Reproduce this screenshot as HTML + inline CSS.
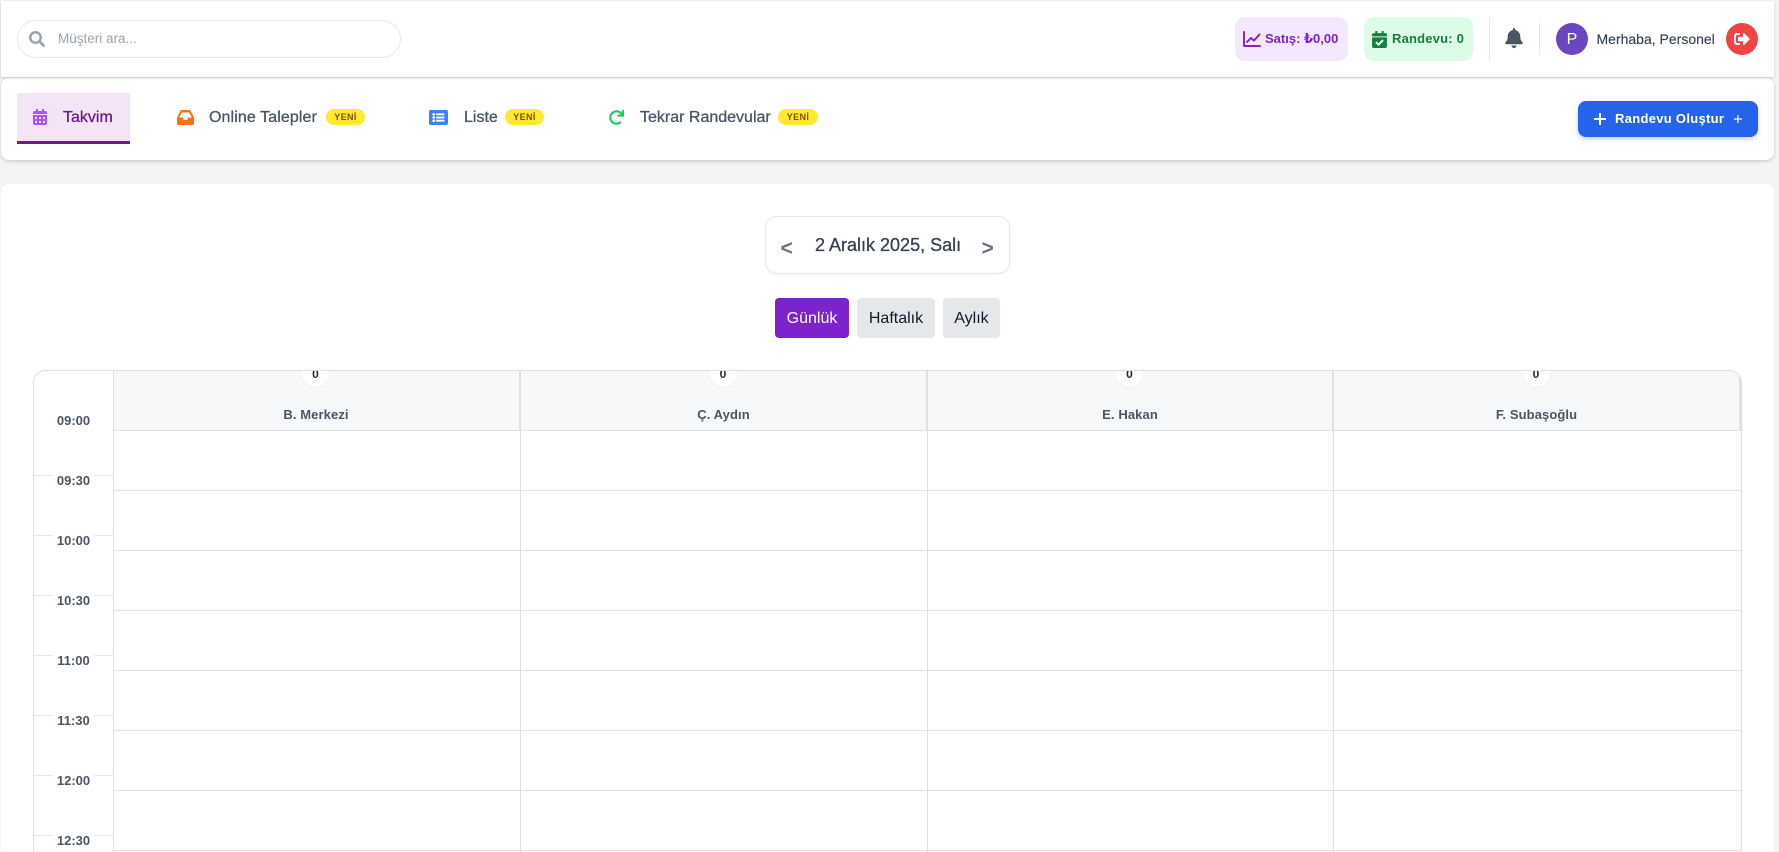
<!DOCTYPE html>
<html lang="tr">
<head>
<meta charset="utf-8">
<title>Takvim</title>
<style>
*{box-sizing:border-box;margin:0;padding:0}
html,body{width:1779px;height:852px;overflow:hidden;background:#f3f4f6;font-family:"Liberation Sans","DejaVu Sans",sans-serif}
#p{position:relative;width:1779px;height:852px;overflow:hidden;background:#f3f4f6}
.a{position:absolute;display:block}
.t{position:absolute;white-space:nowrap;line-height:20px;height:20px}
svg{position:absolute;display:block}
.hdr{position:absolute;left:1px;top:1px;width:1773px;height:76px;background:#fff;box-shadow:0 1px 3px rgba(0,0,0,.12),0 1px 2px rgba(0,0,0,.06)}
.nav{position:absolute;left:1px;top:78px;width:1773px;height:82px;background:#fff;border-radius:8px;box-shadow:0 1px 3px rgba(0,0,0,.14),0 2px 4px rgba(0,0,0,.06)}
.main{position:absolute;left:1px;top:184px;width:1773px;height:668px;background:#fff;border-radius:8px 8px 0 0}
.badge{position:absolute;top:109px;height:16px;border-radius:8px;background:#fde92f;color:#854d0e;font-size:9px;font-weight:700;line-height:16px;text-align:center;letter-spacing:.4px}
.nl{color:#4b5563;font-size:16px;font-weight:400;top:108px;-webkit-text-stroke:.3px #4b5563}
.vb{position:absolute;top:298px;height:40px;border-radius:4px;background:#e5e7eb;color:#111827;font-size:16px;line-height:41px;text-align:center}
.cal{position:absolute;left:33px;top:370px;width:1709px;height:482px;border:1px solid #e0e0e0;border-bottom:0;border-radius:12px 12px 0 0;overflow:hidden;background:#fff}
.hc{position:absolute;top:0;height:60px;background:#f7f8fa;border-right:2px solid #e0e0e0;border-bottom:1px solid #e0e0e0}
.hc b{position:absolute;left:0;right:0;top:34px;text-align:center;font-size:13px;letter-spacing:.1px;line-height:20px;color:#4b5563}
.hc i{position:absolute;left:50%;top:-11px;width:27px;height:27px;margin-left:-14px;border-radius:50%;background:#fff;box-shadow:0 1px 1px rgba(0,0,0,.04);font-style:normal;font-weight:700;font-size:12px;line-height:29px;text-align:center;color:#1f2937}
.hl{position:absolute;left:79px;right:0;height:1px;background:#e0e0e0}
.vl{position:absolute;top:0;bottom:0;width:1px;background:#e0e0e0}
.tl{position:absolute;left:0;width:79px;height:1px;background:#e5e7eb}
.tm{position:absolute;left:19px;width:41px;height:18px;background:#fff;text-align:center;font-size:13px;font-weight:700;line-height:18px;color:#4b5563}
</style>
</head>
<body>
<div id="p">

<div class="nav"></div>
<div class="hdr"></div>

<div class="a" style="left:17px;top:20px;width:384px;height:38px;border:1px solid #e5e7eb;border-radius:19px;background:#fff"></div>
<svg style="left:29px;top:31px" width="16" height="16" viewBox="0 0 512 512" fill="#9ca3af"><path d="M505 442.7L405.3 343c-4.5-4.5-10.6-7-17-7H372c27.6-35.3 44-79.7 44-128C416 93.1 322.9 0 208 0S0 93.1 0 208s93.1 208 208 208c48.3 0 92.7-16.4 128-44v16.3c0 6.4 2.5 12.5 7 17l99.7 99.7c9.4 9.4 24.6 9.4 33.9 0l28.3-28.3c9.4-9.4 9.4-24.6.1-34zM208 336c-70.7 0-128-57.2-128-128 0-70.7 57.2-128 128-128 70.7 0 128 57.2 128 128 0 70.7-57.2 128-128 128z"/></svg>
<span class="t" style="left:58px;top:29px;font-size:13.5px;color:#9ca3af">Müşteri ara...</span>

<div class="a" style="left:1235px;top:17px;width:113px;height:44px;border-radius:10px;background:#f3e8ff"></div>
<svg style="left:1243px;top:31px" width="18" height="16" viewBox="0 0 18 16" fill="none" stroke="#7e22ce" stroke-width="1.9" stroke-linecap="round" stroke-linejoin="round"><path d="M1 1v14h16"/><path d="M4 11l4-4 3 2.500 5.500-6"/></svg>
<span class="t" style="left:1265px;top:29px;font-size:13px;font-weight:700;color:#7e22ce">Satış: ₺0,00</span>

<div class="a" style="left:1364px;top:17px;width:109px;height:44px;border-radius:10px;background:#dcfce7"></div>
<svg style="left:1372px;top:31px" width="15" height="17" viewBox="0 0 448 512" fill="#15803d"><path d="M436 160H12c-6.627 0-12-5.373-12-12v-36c0-26.51 21.49-48 48-48h48V12c0-6.627 5.373-12 12-12h40c6.627 0 12 5.373 12 12v52h128V12c0-6.627 5.373-12 12-12h40c6.627 0 12 5.373 12 12v52h48c26.51 0 48 21.49 48 48v36c0 6.627-5.373 12-12 12zM12 192h424c6.627 0 12 5.373 12 12v260c0 26.51-21.49 48-48 48H48c-26.51 0-48-21.49-48-48V204c0-6.627 5.373-12 12-12zm333.296 95.947l-28.169-28.398c-4.667-4.705-12.265-4.736-16.97-.068L194.12 364.665l-45.98-46.352c-4.667-4.705-12.266-4.736-16.971-.068l-28.397 28.17c-4.705 4.667-4.736 12.265-.068 16.97l82.601 83.269c4.667 4.705 12.265 4.736 16.97.068l142.953-141.805c4.705-4.667 4.736-12.265.068-16.97z"/></svg>
<span class="t" style="left:1392px;top:29px;font-size:13px;font-weight:700;letter-spacing:.2px;color:#15803d">Randevu: 0</span>

<div class="a" style="left:1489px;top:17px;width:1px;height:44px;background:#e5e7eb"></div>
<svg style="left:1505px;top:28px" width="18" height="20" viewBox="0 0 448 512" fill="#4b5563"><path d="M224 512c35.32 0 63.97-28.65 63.97-64H160.03c0 35.35 28.65 64 63.97 64zm215.39-149.71c-19.32-20.76-55.47-51.99-55.47-154.29 0-77.7-54.48-139.9-127.94-155.16V32c0-17.67-14.32-32-31.98-32s-31.98 14.33-31.98 32v20.84C118.56 68.1 64.08 130.3 64.08 208c0 102.3-36.15 133.53-55.47 154.29-6 6.45-8.66 14.16-8.61 21.71.11 16.4 12.98 32 32.1 32h383.8c19.12 0 32-15.6 32.1-32 .05-7.55-2.61-15.27-8.61-21.71z"/></svg>
<div class="a" style="left:1539px;top:23px;width:1px;height:32px;background:#e5e7eb"></div>
<div class="a" style="left:1556px;top:23px;width:32px;height:32px;border-radius:50%;background:#6b46c1;color:#fff;font-size:16px;line-height:33px;text-align:center">P</div>
<span class="t" style="left:1596.500px;top:29px;font-size:14px;color:#374151;-webkit-text-stroke:.15px #374151">Merhaba, Personel</span>
<div class="a" style="left:1726px;top:23px;width:32px;height:32px;border-radius:50%;background:#ef4444"></div>
<svg style="left:1734px;top:31px" width="16" height="16" viewBox="0 0 512 512" fill="#fff"><path d="M497 273L329 441c-15 15-41 4.500-41-17v-96H152c-13.300 0-24-10.700-24-24v-96c0-13.300 10.700-24 24-24h136V88c0-21.400 25.900-32 41-17l168 168c9.300 9.400 9.300 24.600 0 34zM192 436v-40c0-6.600-5.400-12-12-12H96c-17.700 0-32-14.300-32-32V160c0-17.700 14.300-32 32-32h84c6.600 0 12-5.400 12-12V76c0-6.600-5.400-12-12-12H96c-53 0-96 43-96 96v192c0 53 43 96 96 96h84c6.600 0 12-5.400 12-12z"/></svg>

<div class="a" style="left:17px;top:93px;width:113px;height:51px;background:#f3e5f5;border-bottom:3px solid #6a1b9a"></div>
<svg style="left:33px;top:109px" width="14" height="16" viewBox="0 0 448 512" fill="#a855f7"><path d="M0 464c0 26.500 21.500 48 48 48h352c26.500 0 48-21.500 48-48V192H0v272zm320-196c0-6.600 5.400-12 12-12h40c6.600 0 12 5.400 12 12v40c0 6.600-5.400 12-12 12h-40c-6.600 0-12-5.400-12-12v-40zm0 128c0-6.600 5.400-12 12-12h40c6.600 0 12 5.400 12 12v40c0 6.600-5.400 12-12 12h-40c-6.600 0-12-5.400-12-12v-40zM192 268c0-6.600 5.400-12 12-12h40c6.600 0 12 5.400 12 12v40c0 6.600-5.400 12-12 12h-40c-6.600 0-12-5.400-12-12v-40zm0 128c0-6.600 5.400-12 12-12h40c6.600 0 12 5.400 12 12v40c0 6.600-5.400 12-12 12h-40c-6.600 0-12-5.400-12-12v-40zM64 268c0-6.600 5.400-12 12-12h40c6.600 0 12 5.400 12 12v40c0 6.600-5.400 12-12 12H76c-6.600 0-12-5.400-12-12v-40zm0 128c0-6.600 5.400-12 12-12h40c6.600 0 12 5.400 12 12v40c0 6.600-5.400 12-12 12H76c-6.600 0-12-5.400-12-12v-40zM400 64h-48V16c0-8.800-7.200-16-16-16h-32c-8.800 0-16 7.200-16 16v48H160V16c0-8.800-7.200-16-16-16h-32c-8.800 0-16 7.200-16 16v48H48C21.500 64 0 85.500 0 112v48h448v-48c0-26.500-21.500-48-48-48z"/></svg>
<span class="t nl" style="left:63px;color:#6a1b9a;-webkit-text-stroke:.3px #6a1b9a">Takvim</span>

<svg style="left:177px;top:110px" width="17" height="15" viewBox="0 64 576 384" preserveAspectRatio="none" fill="#f97316"><path d="M567.938 243.908L462.250 85.374A48.003 48.003 0 0 0 422.311 64H153.689a48 48 0 0 0-39.938 21.374L8.062 243.908A47.994 47.994 0 0 0 0 270.533V400c0 26.510 21.490 48 48 48h480c26.510 0 48-21.490 48-48V270.533a47.994 47.994 0 0 0-8.062-26.625zM162.252 128h251.497l85.333 128H376l-32 64H232l-32-64H76.918l85.334-128z"/></svg>
<span class="t nl" style="left:209px;letter-spacing:.1px">Online Talepler</span>
<span class="badge" style="left:326px;width:39px">YENİ</span>

<svg style="left:429px;top:110px" width="19" height="15" viewBox="0 32 512 448" preserveAspectRatio="none" fill="#3b82f6"><path d="M464 480H48c-26.510 0-48-21.490-48-48V80c0-26.510 21.490-48 48-48h416c26.510 0 48 21.490 48 48v352c0 26.510-21.490 48-48 48zM128 120c-22.091 0-40 17.909-40 40s17.909 40 40 40 40-17.909 40-40-17.909-40-40-40zm0 96c-22.091 0-40 17.909-40 40s17.909 40 40 40 40-17.909 40-40-17.909-40-40-40zm0 96c-22.091 0-40 17.909-40 40s17.909 40 40 40 40-17.909 40-40-17.909-40-40-40zm288-136v-32c0-6.627-5.373-12-12-12H204c-6.627 0-12 5.373-12 12v32c0 6.627 5.373 12 12 12h200c6.627 0 12-5.373 12-12zm0 96v-32c0-6.627-5.373-12-12-12H204c-6.627 0-12 5.373-12 12v32c0 6.627 5.373 12 12 12h200c6.627 0 12-5.373 12-12zm0 96v-32c0-6.627-5.373-12-12-12H204c-6.627 0-12 5.373-12 12v32c0 6.627 5.373 12 12 12h200c6.627 0 12-5.373 12-12z"/></svg>
<span class="t nl" style="left:464px">Liste</span>
<span class="badge" style="left:505px;width:39px">YENİ</span>

<svg style="left:609px;top:110px" width="15" height="15" viewBox="0 0 512 512" fill="#22c55e"><path d="M500.330 0h-47.410a12 12 0 0 0-12 12.570l4 82.760A247.420 247.420 0 0 0 256 8C119.340 8 7.900 119.530 8 256.190 8.100 393.070 119.100 504 256 504a247.100 247.100 0 0 0 166.180-63.910 12 12 0 0 0 .48-17.430l-34-34a12 12 0 0 0-16.380-.55A176 176 0 1 1 402.100 157.800l-101.530-4.870a12 12 0 0 0-12.570 12v47.410a12 12 0 0 0 12 12h200.330a12 12 0 0 0 12-12V12a12 12 0 0 0-12-12z"/></svg>
<span class="t nl" style="left:640px">Tekrar Randevular</span>
<span class="badge" style="left:778px;width:40px">YENİ</span>

<div class="a" style="left:1578px;top:101px;width:180px;height:36px;border-radius:8px;background:#2563eb;box-shadow:0 2px 5px rgba(37,99,235,.3)"></div>
<svg style="left:1594px;top:113px" width="12" height="12" viewBox="0 0 12 12" stroke="#fff" stroke-width="2"><path d="M6 0v12M0 6h12"/></svg>
<span class="t" style="left:1615px;top:109px;font-size:13px;font-weight:700;letter-spacing:.3px;color:#fff">Randevu Oluştur</span>
<svg style="left:1734px;top:115px" width="8" height="8" viewBox="0 0 8 8" stroke="#fff" stroke-width="1.200"><path d="M4 0v8M0 4h8"/></svg>

<div class="main"></div>
<div class="a" style="left:765px;top:216px;width:245px;height:58px;border:1px solid #e5e7eb;border-radius:12px;background:#fff;box-shadow:0 1px 2px rgba(0,0,0,.05)"></div>
<span class="t" style="left:780.500px;top:239px;font-size:21px;font-weight:700;color:#6b7280">&lt;</span>
<span class="t" style="left:815px;top:235px;font-size:18px;color:#374151;-webkit-text-stroke:.3px #374151">2 Aralık 2025, Salı</span>
<span class="t" style="left:981.500px;top:239px;font-size:21px;font-weight:700;color:#6b7280">&gt;</span>

<div class="vb" style="left:775px;width:74px;background:#7e22ce;color:#fff">Günlük</div>
<div class="vb" style="left:857px;width:78px">Haftalık</div>
<div class="vb" style="left:943px;width:57px">Aylık</div>

<div class="cal">
  <div class="hc" style="left:79px;width:408px"><i>0</i><b>B. Merkezi</b></div>
  <div class="hc" style="left:487px;width:407px"><i>0</i><b>Ç. Aydın</b></div>
  <div class="hc" style="left:894px;width:406px"><i>0</i><b>E. Hakan</b></div>
  <div class="hc" style="left:1300px;width:407px"><i>0</i><b>F. Subaşoğlu</b></div>
  <div class="vl" style="left:79px"></div>
  <div class="vl" style="left:486px"></div>
  <div class="vl" style="left:893px"></div>
  <div class="vl" style="left:1299px"></div>

  <div class="hl" style="top:119px"></div>
  <div class="hl" style="top:179px"></div>
  <div class="hl" style="top:239px"></div>
  <div class="hl" style="top:299px"></div>
  <div class="hl" style="top:359px"></div>
  <div class="hl" style="top:419px"></div>
  <div class="hl" style="top:479px"></div>

  <div class="tl" style="top:104px"></div>
  <div class="tl" style="top:164px"></div>
  <div class="tl" style="top:224px"></div>
  <div class="tl" style="top:284px"></div>
  <div class="tl" style="top:344px"></div>
  <div class="tl" style="top:404px"></div>
  <div class="tl" style="top:464px"></div>

  <div class="tm" style="top:41px">09:00</div>
  <div class="tm" style="top:101px">09:30</div>
  <div class="tm" style="top:161px">10:00</div>
  <div class="tm" style="top:221px">10:30</div>
  <div class="tm" style="top:281px">11:00</div>
  <div class="tm" style="top:341px">11:30</div>
  <div class="tm" style="top:401px">12:00</div>
  <div class="tm" style="top:461px">12:30</div>
</div>

</div>
</body>
</html>
